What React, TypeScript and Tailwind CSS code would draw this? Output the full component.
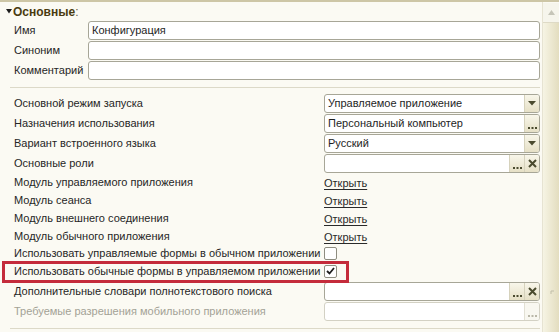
import React from "react";

type BtnKind = "drop" | "dots" | "x";

function Btn({ kind, disabled }: { kind: BtnKind; disabled?: boolean }) {
  const c = disabled ? "#b9b7a8" : "#4a4a2e";
  return (
    <div
      className={`flex h-full w-[15px] items-center justify-center border-l ${
        disabled ? "border-[#e2e0d4] bg-[#f8f7f0]" : "border-[#d6d2bc] bg-gradient-to-b from-[#f8f6ea] to-[#e6e0c6]"
      }`}
    >
      {kind === "drop" && (
        <svg width="8" height="5" viewBox="0 0 8 5">
          <polygon points="0,0 8,0 4,4.5" fill={c} />
        </svg>
      )}
      {kind === "dots" && (
        <svg width="11" height="17" viewBox="0 0 11 17">
          <rect x="1" y="12" width="2" height="2" fill={c} />
          <rect x="4.5" y="12" width="2" height="2" fill={c} />
          <rect x="8" y="12" width="2" height="2" fill={c} />
        </svg>
      )}
      {kind === "x" && (
        <svg width="9" height="9" viewBox="0 0 9 9">
          <path d="M1 1 L8 8 M8 1 L1 8" stroke={c} strokeWidth="2" />
        </svg>
      )}
    </div>
  );
}

function Field({ value, buttons = [], disabled }: { value?: string; buttons?: BtnKind[]; disabled?: boolean }) {
  return (
    <div
      className={`flex h-[19px] overflow-hidden rounded-[3px] border bg-white ${
        disabled ? "border-[#d3d1c4]" : "border-[#a7a697]"
      }`}
    >
      <div className="flex-1 truncate px-[3px] text-[11px] leading-[17px] text-[#1e1e1e]">{value}</div>
      {buttons.map((b, i) => (
        <Btn key={i} kind={b} disabled={disabled} />
      ))}
    </div>
  );
}

function CheckBox({ checked }: { checked?: boolean }) {
  return (
    <div className="flex h-[13px] w-[13px] items-center justify-center rounded-[2px] border border-[#8e8d80] bg-white">
      {checked && (
        <svg width="9" height="8" viewBox="0 0 9 8">
          <path d="M1 4 L3.5 6.5 L8 1" stroke="#1e1e1e" strokeWidth="1.8" fill="none" />
        </svg>
      )}
    </div>
  );
}

function Link() {
  return <span className="text-[11px] text-[#2a2a2a] underline underline-offset-[2px]">Открыть</span>;
}

function Row({ label, h, children, grey }: { label: string; h: string; children?: React.ReactNode; grey?: boolean }) {
  return (
    <div className={`flex items-center ${h}`}>
      <div className={`w-[310px] shrink-0 whitespace-nowrap text-[11px] ${grey ? "text-[#a3a296]" : "text-[#262626]"}`}>
        {label}
      </div>
      <div className="flex-1">{children}</div>
    </div>
  );
}

export default function App() {
  return (
    <div className="flex h-[332px] w-[559px] overflow-hidden border-t-2 border-[#cdc6a6] bg-[#fbfaf3] font-['Liberation_Sans',Arial,sans-serif]">
      <div className="w-[542px] shrink-0 pr-[2px]">
        {/* heading */}
        <div className="flex h-[19px] items-center pl-[6px]">
          <svg width="6" height="5" viewBox="0 0 6 5" className="mr-[1px]">
            <polygon points="0,0 6,0 3,4.5" fill="#1c1c1c" />
          </svg>
          <span className="text-[12px] font-bold text-[#4a3b10]">Основные</span>
          <span className="text-[12px] text-[#6a6040]">:</span>
        </div>
        {/* first section */}
        <div className="flex flex-col pl-[14px]">
          {[
            ["Имя", "Конфигурация"],
            ["Синоним", ""],
            ["Комментарий", ""],
          ].map(([l, v]) => (
            <div key={l} className="flex h-[20px] items-start">
              <div className="w-[74px] shrink-0 text-[11px] leading-[19px] text-[#262626]">{l}</div>
              <div className="flex-1">
                <Field value={v} />
              </div>
            </div>
          ))}
        </div>
        <div className="ml-[10px] mt-[6px] h-px bg-[#dcd9c8]" />
        {/* second section */}
        <div className="mt-[5px] flex flex-col pl-[14px]">
          <div className="flex flex-col">
            <Row label="Основной режим запуска" h="h-[20px]">
              <Field value="Управляемое приложение" buttons={["drop"]} />
            </Row>
            <Row label="Назначения использования" h="h-[20px]">
              <Field value="Персональный компьютер" buttons={["dots"]} />
            </Row>
            <Row label="Вариант встроенного языка" h="h-[20px]">
              <Field value="Русский" buttons={["drop"]} />
            </Row>
            <Row label="Основные роли" h="h-[20px]">
              <Field value="" buttons={["dots", "x"]} />
            </Row>
          </div>
          <Row label="Модуль управляемого приложения" h="h-[18px]">
            <Link />
          </Row>
          <Row label="Модуль сеанса" h="h-[18px]">
            <Link />
          </Row>
          <Row label="Модуль внешнего соединения" h="h-[18px]">
            <Link />
          </Row>
          <Row label="Модуль обычного приложения" h="h-[18px]">
            <Link />
          </Row>
          <Row label="Использовать управляемые формы в обычном приложении" h="h-[17px]">
            <CheckBox />
          </Row>
          <div className="relative">
            <Row label="Использовать обычные формы в управляемом приложении" h="h-[18px]">
              <CheckBox checked />
            </Row>
            <div className="pointer-events-none absolute left-[-12px] top-[-1px] h-[22px] w-[347px] border-[3px] border-[#c42b3b]" />
          </div>
          <div className="mt-[1px]">
            <Row label="Дополнительные словари полнотекстового поиска" h="h-[20px]">
              <Field value="" buttons={["dots", "x"]} />
            </Row>
            <Row label="Требуемые разрешения мобильного приложения" h="h-[20px]" grey>
              <Field value="" buttons={["dots"]} disabled />
            </Row>
          </div>
        </div>
        <div className="ml-[10px] mt-[7px] h-px bg-[#dcd9c8]" />
      </div>
      {/* scrollbar */}
      <div className="flex w-[17px] shrink-0 flex-col border-l border-[#e6e3d2]">
        <div className="mt-[1px] flex h-[20px] items-center justify-center border-b border-[#dedac6] bg-[#f6f5ec]">
          <svg width="7" height="5" viewBox="0 0 7 5">
            <polygon points="3.5,0 7,5 0,5" fill="#c6c5b8" />
          </svg>
        </div>
        <div className="relative flex-1 bg-gradient-to-r from-[#f6f4e4] to-[#e3ddbf]">
          <svg width="5" height="5" viewBox="0 0 5 5" className="absolute left-[7px] top-[267px]">
            <path d="M1 4 L1 1 L4 1" stroke="#c0bda8" strokeWidth="1" fill="none" />
          </svg>
        </div>
      </div>
    </div>
  );
}
